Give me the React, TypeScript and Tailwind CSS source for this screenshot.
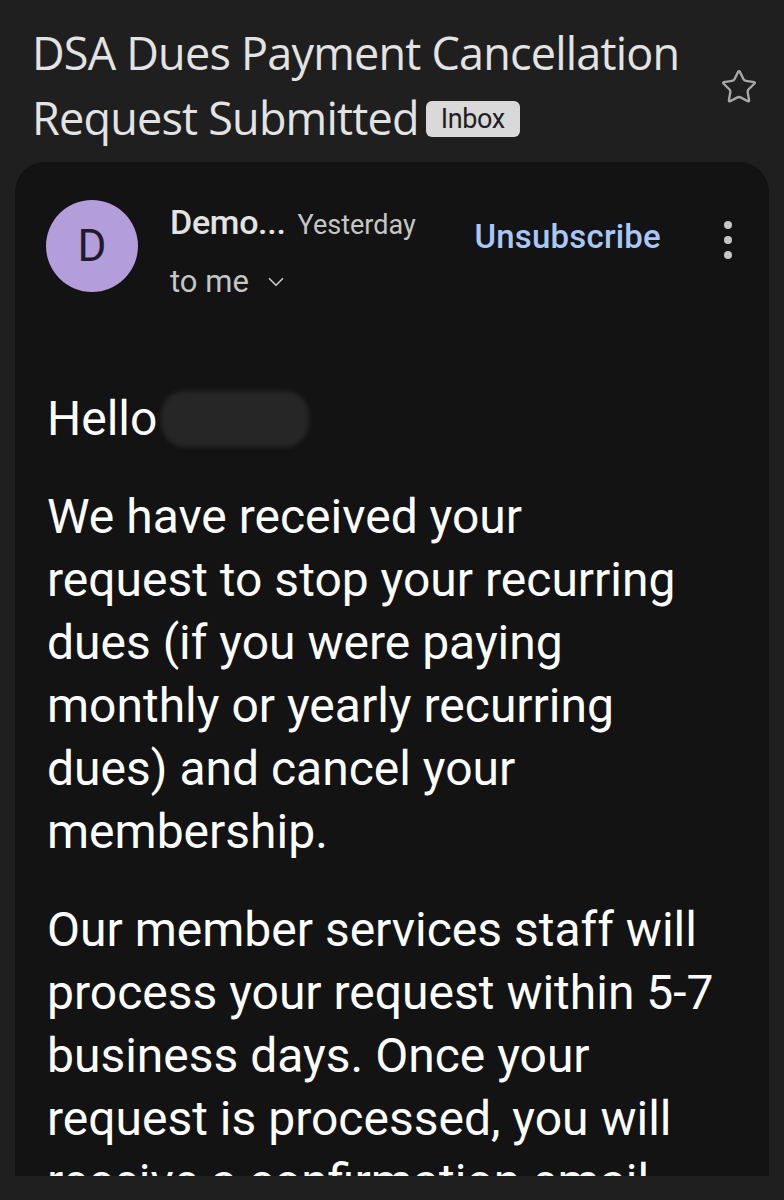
import React from 'react';
import { ChevronDown, Star } from 'lucide-react';

// lines are broken as in the mail client's narrow view
const paragraphs = [
  [
    'We have received your',
    'request to stop your recurring',
    'dues (if you were paying',
    'monthly or yearly recurring',
    'dues) and cancel your',
    'membership.',
  ],
  [
    'Our member services staff will',
    'process your request within 5-7',
    'business days. Once your',
    'request is processed, you will',
    'receive a confirmation email.',
  ],
];

export default function App() {
  return (
    <div className="w-[784px] h-[1200px] bg-[#1f1f1f] overflow-hidden font-['Roboto',sans-serif]">
      {/* Subject */}
      <div className="flex items-start pt-[20px] pl-[32px] pr-[26px]">
        <div className="flex-1 text-[45px] leading-[65px] text-[#e3e3e3] font-['Open_Sans',sans-serif] tracking-[-0.8px]">
          <div>DSA Dues Payment Cancellation</div>
          <div className="flex items-center">
            <span>Request Submitted</span>
            <span className="ml-[7px] mt-[2px] px-[15px] h-[36px] leading-[36px] rounded-[6px] bg-[#d9d9d9] text-[#1f1f1f] text-[27px] tracking-[-0.4px] font-['Roboto',sans-serif]">
              Inbox
            </span>
          </div>
        </div>
        <Star className="mt-[48px] w-[38px] h-[38px] text-[#a8a8a8]" strokeWidth={1.5} />
      </div>

      {/* Message card */}
      <div className="mt-[12px] mx-[15px] h-[1014px] rounded-t-[30px] bg-[#131313] overflow-hidden">
        <div className="flex items-start pt-[38px] pl-[31px] pr-[37px]">
          <div className="w-[92px] h-[92px] rounded-full bg-[#b39ddb] flex items-center justify-center text-[#1f1b2e] text-[44px]">
            D
          </div>
          <div className="ml-[32px] mt-[2px]">
            <div className="flex items-baseline gap-[12px] leading-[40px]">
              <span className="text-[34px] font-medium text-[#e3e3e3] tracking-[-0.3px]">Demo...</span>
              <span className="text-[27px] text-[#c4c7c5]">Yesterday</span>
            </div>
            <div className="flex items-center mt-[17px] leading-[40px] text-[31px] text-[#c4c7c5]">
              to me
              <ChevronDown className="ml-[14px] w-[26px] h-[26px]" strokeWidth={1.6} />
            </div>
          </div>
          <span className="ml-auto mt-[17px] leading-[40px] text-[33px] font-medium text-[#a8c7fa] tracking-[0.2px]">Unsubscribe</span>
          <div className="ml-[63px] mt-[21px] flex flex-col gap-[7px]">
            <span className="w-[8px] h-[8px] rounded-full bg-[#c4c7c5]" />
            <span className="w-[8px] h-[8px] rounded-full bg-[#c4c7c5]" />
            <span className="w-[8px] h-[8px] rounded-full bg-[#c4c7c5]" />
          </div>
        </div>

        <div className="pl-[32px] pt-[85px] text-[48px] leading-[63px] text-white whitespace-nowrap">
          <p className="flex items-center">
            Hello
            <span className="ml-[4px] inline-block w-[148px] h-[56px] rounded-[24px] bg-[#262626] blur-[2px]" />
          </p>
          {paragraphs.map((lines, i) => (
            <p key={i} className="mt-[35px]">
              {lines.map((l) => (
                <span key={l} className="block">
                  {l}
                </span>
              ))}
            </p>
          ))}
        </div>
      </div>
    </div>
  );
}
